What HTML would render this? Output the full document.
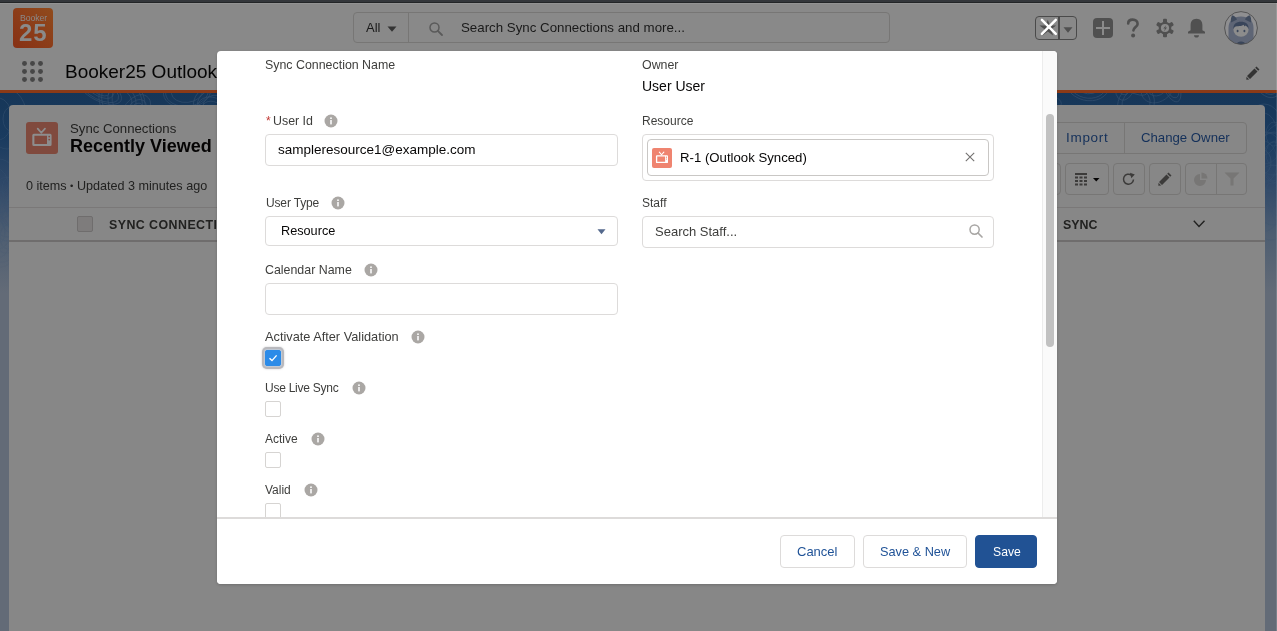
<!DOCTYPE html>
<html><head><meta charset="utf-8">
<style>
*{box-sizing:border-box;margin:0;padding:0}
html,body{width:1277px;height:631px;overflow:hidden;background:#898989;font-family:"Liberation Sans",sans-serif}
.a{position:absolute}
.t{position:absolute;white-space:nowrap;line-height:1;will-change:transform}
svg{position:absolute;overflow:visible}
</style></head><body>
<!-- ===== BACKGROUND PAGE (post-overlay colours) ===== -->
<div class="a" style="left:0;top:0;width:1277px;height:2px;background:#34373b"></div><div class="a" style="left:0;top:2px;width:1277px;height:1px;background:#232527"></div><div class="a" style="left:0;top:3px;width:1277px;height:1px;background:#939393"></div>
<!-- brand band -->
<div class="a" style="left:0;top:90px;width:1277px;height:3px;background:#8b3a17"></div>
<div class="a" style="left:0;top:93px;width:1277px;height:538px;background:linear-gradient(#163658 0px,#1a3b5f 45px,#2f4868 90px,#4d5d71 140px,#636b77 200px,#636b77 538px)"></div>
<svg id="topo" style="left:0;top:93px;overflow:hidden" width="1277" height="260"><defs><linearGradient id="tg" x1="0" y1="0" x2="0" y2="1"><stop offset="0" stop-color="#fff" stop-opacity="1"/><stop offset="0.75" stop-color="#fff" stop-opacity="0"/></linearGradient><mask id="tm"><rect width="1277" height="260" fill="url(#tg)"/></mask></defs><g mask="url(#tm)" fill="none" stroke="#3a5573" stroke-width="0.7" opacity="0.8"><ellipse cx="802" cy="17" rx="15.4" ry="13.2" transform="rotate(133 802 17)"/><ellipse cx="802" cy="17" rx="20.4" ry="17.4" transform="rotate(133 802 17)"/><ellipse cx="802" cy="17" rx="27.2" ry="23.2" transform="rotate(133 802 17)"/><ellipse cx="802" cy="17" rx="31.3" ry="26.7" transform="rotate(133 802 17)"/><ellipse cx="1169" cy="-14" rx="14.7" ry="5.3" transform="rotate(69 1169 -14)"/><ellipse cx="1169" cy="-14" rx="20.1" ry="7.3" transform="rotate(69 1169 -14)"/><ellipse cx="1169" cy="-14" rx="24.3" ry="8.8" transform="rotate(69 1169 -14)"/><ellipse cx="220" cy="23" rx="7.6" ry="2.9" transform="rotate(143 220 23)"/><ellipse cx="220" cy="23" rx="11.8" ry="4.5" transform="rotate(143 220 23)"/><ellipse cx="220" cy="23" rx="15.6" ry="6.0" transform="rotate(143 220 23)"/><ellipse cx="1130" cy="-10" rx="15.6" ry="6.2" transform="rotate(30 1130 -10)"/><ellipse cx="1130" cy="-10" rx="20.0" ry="8.0" transform="rotate(30 1130 -10)"/><ellipse cx="1136" cy="11" rx="15.4" ry="13.6" transform="rotate(124 1136 11)"/><ellipse cx="1136" cy="11" rx="20.0" ry="17.6" transform="rotate(124 1136 11)"/><ellipse cx="457" cy="-12" rx="8.6" ry="6.8" transform="rotate(60 457 -12)"/><ellipse cx="457" cy="-12" rx="13.8" ry="10.9" transform="rotate(60 457 -12)"/><ellipse cx="914" cy="-17" rx="14.2" ry="6.9" transform="rotate(87 914 -17)"/><ellipse cx="914" cy="-17" rx="19.6" ry="9.6" transform="rotate(87 914 -17)"/><ellipse cx="914" cy="-17" rx="22.4" ry="11.0" transform="rotate(87 914 -17)"/><ellipse cx="1267" cy="-19" rx="9.6" ry="6.0" transform="rotate(73 1267 -19)"/><ellipse cx="1267" cy="-19" rx="14.3" ry="9.0" transform="rotate(73 1267 -19)"/><ellipse cx="1267" cy="-19" rx="20.9" ry="13.2" transform="rotate(73 1267 -19)"/><ellipse cx="1267" cy="-19" rx="24.3" ry="15.3" transform="rotate(73 1267 -19)"/><ellipse cx="914" cy="11" rx="7.2" ry="5.7" transform="rotate(44 914 11)"/><ellipse cx="914" cy="11" rx="12.2" ry="9.7" transform="rotate(44 914 11)"/><ellipse cx="1158" cy="-7" rx="7.1" ry="5.5" transform="rotate(135 1158 -7)"/><ellipse cx="1158" cy="-7" rx="11.2" ry="8.7" transform="rotate(135 1158 -7)"/><ellipse cx="1158" cy="-7" rx="18.9" ry="14.7" transform="rotate(135 1158 -7)"/><ellipse cx="100" cy="-3" rx="9.6" ry="4.5" transform="rotate(27 100 -3)"/><ellipse cx="100" cy="-3" rx="13.8" ry="6.4" transform="rotate(27 100 -3)"/><ellipse cx="100" cy="-3" rx="20.4" ry="9.5" transform="rotate(27 100 -3)"/><ellipse cx="100" cy="-3" rx="23.5" ry="10.9" transform="rotate(27 100 -3)"/><ellipse cx="1034" cy="11" rx="12.9" ry="5.1" transform="rotate(179 1034 11)"/><ellipse cx="1034" cy="11" rx="18.9" ry="7.5" transform="rotate(179 1034 11)"/><ellipse cx="1034" cy="11" rx="23.0" ry="9.1" transform="rotate(179 1034 11)"/><ellipse cx="1034" cy="11" rx="27.3" ry="10.8" transform="rotate(179 1034 11)"/><ellipse cx="293" cy="10" rx="10.6" ry="3.5" transform="rotate(76 293 10)"/><ellipse cx="293" cy="10" rx="14.6" ry="4.9" transform="rotate(76 293 10)"/><ellipse cx="293" cy="10" rx="20.5" ry="6.8" transform="rotate(76 293 10)"/><ellipse cx="1087" cy="-13" rx="11.6" ry="9.8" transform="rotate(24 1087 -13)"/><ellipse cx="1087" cy="-13" rx="16.0" ry="13.4" transform="rotate(24 1087 -13)"/><ellipse cx="1087" cy="-13" rx="21.1" ry="17.7" transform="rotate(24 1087 -13)"/><ellipse cx="1087" cy="-13" rx="24.0" ry="20.1" transform="rotate(24 1087 -13)"/><ellipse cx="535" cy="-13" rx="14.5" ry="8.3" transform="rotate(176 535 -13)"/><ellipse cx="535" cy="-13" rx="20.0" ry="11.4" transform="rotate(176 535 -13)"/><ellipse cx="535" cy="-13" rx="24.4" ry="14.0" transform="rotate(176 535 -13)"/><ellipse cx="535" cy="-13" rx="28.3" ry="16.2" transform="rotate(176 535 -13)"/><ellipse cx="513" cy="-13" rx="14.2" ry="5.8" transform="rotate(96 513 -13)"/><ellipse cx="513" cy="-13" rx="20.0" ry="8.1" transform="rotate(96 513 -13)"/><ellipse cx="513" cy="-13" rx="22.9" ry="9.4" transform="rotate(96 513 -13)"/><ellipse cx="629" cy="6" rx="14.7" ry="11.3" transform="rotate(65 629 6)"/><ellipse cx="629" cy="6" rx="20.1" ry="15.5" transform="rotate(65 629 6)"/><ellipse cx="629" cy="6" rx="25.3" ry="19.5" transform="rotate(65 629 6)"/><ellipse cx="629" cy="6" rx="31.2" ry="24.1" transform="rotate(65 629 6)"/><ellipse cx="460" cy="15" rx="14.4" ry="12.8" transform="rotate(48 460 15)"/><ellipse cx="460" cy="15" rx="20.3" ry="18.0" transform="rotate(48 460 15)"/><ellipse cx="460" cy="15" rx="23.7" ry="21.1" transform="rotate(48 460 15)"/><ellipse cx="216" cy="23" rx="11.5" ry="8.1" transform="rotate(45 216 23)"/><ellipse cx="216" cy="23" rx="17.1" ry="12.0" transform="rotate(45 216 23)"/><ellipse cx="216" cy="23" rx="22.1" ry="15.5" transform="rotate(45 216 23)"/><ellipse cx="1033" cy="-3" rx="9.5" ry="5.2" transform="rotate(169 1033 -3)"/><ellipse cx="1033" cy="-3" rx="13.8" ry="7.5" transform="rotate(169 1033 -3)"/><ellipse cx="1033" cy="-3" rx="20.9" ry="11.4" transform="rotate(169 1033 -3)"/><ellipse cx="1033" cy="-3" rx="24.2" ry="13.2" transform="rotate(169 1033 -3)"/><ellipse cx="461" cy="-3" rx="11.3" ry="9.1" transform="rotate(30 461 -3)"/><ellipse cx="461" cy="-3" rx="16.2" ry="13.0" transform="rotate(30 461 -3)"/><ellipse cx="893" cy="16" rx="10.2" ry="8.8" transform="rotate(111 893 16)"/><ellipse cx="893" cy="16" rx="16.0" ry="13.8" transform="rotate(111 893 16)"/><ellipse cx="893" cy="16" rx="19.4" ry="16.7" transform="rotate(111 893 16)"/><ellipse cx="893" cy="16" rx="25.5" ry="22.0" transform="rotate(111 893 16)"/><ellipse cx="1125" cy="-6" rx="8.0" ry="5.4" transform="rotate(106 1125 -6)"/><ellipse cx="1125" cy="-6" rx="13.5" ry="9.1" transform="rotate(106 1125 -6)"/><ellipse cx="218" cy="16" rx="15.8" ry="13.2" transform="rotate(30 218 16)"/><ellipse cx="218" cy="16" rx="21.7" ry="18.1" transform="rotate(30 218 16)"/><ellipse cx="218" cy="16" rx="25.7" ry="21.5" transform="rotate(30 218 16)"/><ellipse cx="704" cy="1" rx="9.8" ry="6.4" transform="rotate(110 704 1)"/><ellipse cx="704" cy="1" rx="15.6" ry="10.2" transform="rotate(110 704 1)"/><ellipse cx="704" cy="1" rx="17.8" ry="11.6" transform="rotate(110 704 1)"/><ellipse cx="515" cy="-6" rx="14.7" ry="9.2" transform="rotate(124 515 -6)"/><ellipse cx="515" cy="-6" rx="19.8" ry="12.4" transform="rotate(124 515 -6)"/><ellipse cx="515" cy="-6" rx="23.9" ry="15.0" transform="rotate(124 515 -6)"/><ellipse cx="370" cy="6" rx="8.9" ry="3.4" transform="rotate(63 370 6)"/><ellipse cx="370" cy="6" rx="14.1" ry="5.3" transform="rotate(63 370 6)"/><ellipse cx="370" cy="6" rx="19.1" ry="7.2" transform="rotate(63 370 6)"/><ellipse cx="370" cy="6" rx="23.7" ry="9.0" transform="rotate(63 370 6)"/><ellipse cx="187" cy="-1" rx="15.6" ry="10.4" transform="rotate(174 187 -1)"/><ellipse cx="187" cy="-1" rx="21.4" ry="14.2" transform="rotate(174 187 -1)"/><ellipse cx="187" cy="-1" rx="23.6" ry="15.7" transform="rotate(174 187 -1)"/><ellipse cx="122" cy="8" rx="11.4" ry="9.4" transform="rotate(59 122 8)"/><ellipse cx="122" cy="8" rx="16.3" ry="13.4" transform="rotate(59 122 8)"/><ellipse cx="122" cy="8" rx="23.3" ry="19.2" transform="rotate(59 122 8)"/><ellipse cx="122" cy="8" rx="26.4" ry="21.8" transform="rotate(59 122 8)"/><ellipse cx="613" cy="15" rx="15.6" ry="10.3" transform="rotate(164 613 15)"/><ellipse cx="613" cy="15" rx="21.6" ry="14.2" transform="rotate(164 613 15)"/><ellipse cx="613" cy="15" rx="25.6" ry="16.8" transform="rotate(164 613 15)"/><ellipse cx="528" cy="-4" rx="10.9" ry="6.4" transform="rotate(52 528 -4)"/><ellipse cx="528" cy="-4" rx="16.2" ry="9.5" transform="rotate(52 528 -4)"/><ellipse cx="528" cy="-4" rx="20.7" ry="12.1" transform="rotate(52 528 -4)"/><ellipse cx="367" cy="19" rx="6.1" ry="2.8" transform="rotate(96 367 19)"/><ellipse cx="367" cy="19" rx="11.7" ry="5.4" transform="rotate(96 367 19)"/><ellipse cx="367" cy="19" rx="15.1" ry="7.0" transform="rotate(96 367 19)"/><ellipse cx="333" cy="-12" rx="8.9" ry="5.2" transform="rotate(109 333 -12)"/><ellipse cx="333" cy="-12" rx="14.1" ry="8.3" transform="rotate(109 333 -12)"/><ellipse cx="333" cy="-12" rx="19.9" ry="11.6" transform="rotate(109 333 -12)"/><ellipse cx="136" cy="18" rx="8.8" ry="5.9" transform="rotate(127 136 18)"/><ellipse cx="136" cy="18" rx="12.9" ry="8.6" transform="rotate(127 136 18)"/><ellipse cx="136" cy="18" rx="18.2" ry="12.2" transform="rotate(127 136 18)"/><ellipse cx="880" cy="21" rx="6.4" ry="3.6" transform="rotate(45 880 21)"/><ellipse cx="880" cy="21" rx="12.1" ry="7.0" transform="rotate(45 880 21)"/><ellipse cx="700" cy="-19" rx="11.9" ry="10.4" transform="rotate(124 700 -19)"/><ellipse cx="700" cy="-19" rx="17.7" ry="15.4" transform="rotate(124 700 -19)"/><ellipse cx="700" cy="-19" rx="23.3" ry="20.3" transform="rotate(124 700 -19)"/><ellipse cx="608" cy="14" rx="8.0" ry="6.4" transform="rotate(53 608 14)"/><ellipse cx="608" cy="14" rx="13.6" ry="10.9" transform="rotate(53 608 14)"/><ellipse cx="608" cy="14" rx="18.7" ry="15.0" transform="rotate(53 608 14)"/><ellipse cx="608" cy="14" rx="22.6" ry="18.0" transform="rotate(53 608 14)"/><ellipse cx="358" cy="19" rx="7.4" ry="4.7" transform="rotate(86 358 19)"/><ellipse cx="358" cy="19" rx="12.1" ry="7.6" transform="rotate(86 358 19)"/><ellipse cx="358" cy="19" rx="16.0" ry="10.1" transform="rotate(86 358 19)"/><ellipse cx="10" cy="96" rx="8" ry="12"/><ellipse cx="-5" cy="96" rx="14" ry="21"/><ellipse cx="-1" cy="96" rx="20" ry="30"/><ellipse cx="10" cy="127" rx="8" ry="12"/><ellipse cx="7" cy="127" rx="14" ry="21"/><ellipse cx="-5" cy="127" rx="20" ry="30"/><ellipse cx="14" cy="114" rx="8" ry="12"/><ellipse cx="14" cy="114" rx="14" ry="21"/><ellipse cx="8" cy="114" rx="20" ry="30"/><ellipse cx="11" cy="26" rx="8" ry="12"/><ellipse cx="-2" cy="26" rx="14" ry="21"/><ellipse cx="7" cy="26" rx="20" ry="30"/><ellipse cx="8" cy="144" rx="8" ry="12"/><ellipse cx="-3" cy="144" rx="14" ry="21"/><ellipse cx="-0" cy="144" rx="20" ry="30"/><ellipse cx="-3" cy="139" rx="8" ry="12"/><ellipse cx="6" cy="139" rx="14" ry="21"/><ellipse cx="2" cy="139" rx="20" ry="30"/><ellipse cx="1274" cy="41" rx="8" ry="12"/><ellipse cx="1263" cy="41" rx="14" ry="21"/><ellipse cx="1264" cy="41" rx="20" ry="30"/><ellipse cx="1263" cy="69" rx="8" ry="12"/><ellipse cx="1263" cy="69" rx="14" ry="21"/><ellipse cx="1274" cy="69" rx="20" ry="30"/><ellipse cx="1280" cy="117" rx="8" ry="12"/><ellipse cx="1265" cy="117" rx="14" ry="21"/><ellipse cx="1271" cy="117" rx="20" ry="30"/><ellipse cx="1274" cy="61" rx="8" ry="12"/><ellipse cx="1272" cy="61" rx="14" ry="21"/><ellipse cx="1281" cy="61" rx="20" ry="30"/><ellipse cx="1263" cy="69" rx="8" ry="12"/><ellipse cx="1276" cy="69" rx="14" ry="21"/><ellipse cx="1265" cy="69" rx="20" ry="30"/><ellipse cx="1272" cy="102" rx="8" ry="12"/><ellipse cx="1280" cy="102" rx="14" ry="21"/><ellipse cx="1273" cy="102" rx="20" ry="30"/></g></svg>
<!-- card -->
<div class="a" style="left:9px;top:105px;width:1256px;height:540px;background:#878787;border-radius:4px"></div>
<div class="a" style="left:1276px;top:3px;width:1px;height:628px;background:rgba(255,255,255,0.15)"></div>

<!-- header: logo -->
<div class="a" style="left:13px;top:8px;width:40px;height:40px;border-radius:4px;background:linear-gradient(45deg,#873115,#8c3d19 50%,#904b1c)"></div>
<div class="t" style="left:19.5px;top:14.1px;font-size:8.7px;color:#8a8a8a;letter-spacing:-0.1px">Booker</div>
<div class="t" style="left:19.3px;top:20.6px;font-size:24px;font-weight:bold;color:#8a8a8a;letter-spacing:0.8px">25</div>

<!-- search -->
<div class="a" style="left:353px;top:12px;width:537px;height:31px;border:1px solid #777675;border-radius:4px"></div>
<div class="a" style="left:408px;top:13px;width:1px;height:29px;background:#777675"></div>
<div class="t" style="left:366px;top:21px;font-size:13px;color:#1a1a1a">All</div>
<svg style="left:387px;top:26px" width="10" height="6"><path d="M0.5 0.5H9.5L5 5.8Z" fill="#333"/></svg>
<svg style="left:429px;top:22px" width="14" height="14"><circle cx="5.5" cy="5.5" r="4.5" fill="none" stroke="#5a5a5a" stroke-width="1.5"/><path d="M8.8 8.8L13 13" stroke="#5a5a5a" stroke-width="1.8" stroke-linecap="round"/></svg>
<div class="t" style="left:461.3px;top:20.8px;font-size:13.3px;color:#1a1a1a">Search Sync Connections and more...</div>

<!-- favourites group -->
<div class="a" style="left:1035px;top:16px;width:42px;height:24px;border:1.5px solid #4a4a4a;border-radius:4px"></div>
<div class="a" style="left:1058px;top:16px;width:2px;height:24px;background:#4a4a4a"></div>
<svg style="left:1039px;top:18.5px" width="18" height="18"><path d="M8.8 0.8L11 6.6H17.1L12.1 10.3L14.1 16.4L8.8 12.6L3.5 16.4L5.5 10.3L0.5 6.6H6.6Z" fill="#4f4f4f"/></svg>
<svg style="left:1063px;top:27px" width="10" height="6"><path d="M0.5 0.3H9.5L5 5.7Z" fill="#505050"/></svg>
<!-- modal close X (white, above overlay) -->
<svg style="left:1040px;top:18px" width="18" height="18"><path d="M1.9 1.9L15.8 15.8M15.8 1.9L1.9 15.8" stroke="#fff" stroke-width="2.5" stroke-linecap="round"/></svg>

<!-- plus -->
<div class="a" style="left:1093px;top:18px;width:20px;height:20px;border-radius:4px;background:#505050"></div>
<div class="a" style="left:1096px;top:27px;width:14px;height:2px;background:#8a8a8a"></div>
<div class="a" style="left:1102px;top:21px;width:2px;height:14px;background:#8a8a8a"></div>
<!-- help -->
<svg style="left:1126px;top:18px" width="14" height="20"><path d="M2.2 5.4C2.2 3 4.2 1.6 6.8 1.6C9.6 1.6 11.6 3.3 11.6 5.9C11.6 8.6 7.6 9.4 7.4 12.4" fill="none" stroke="#505050" stroke-width="2.6" stroke-linecap="round"/><circle cx="7.1" cy="17.4" r="2" fill="#505050"/></svg>
<!-- gear -->
<svg style="left:1156px;top:18px" width="18" height="20" viewBox="0 0 18 20"><g fill="#505050"><circle cx="9" cy="10" r="6.3"/><rect x="7" y="0.8" width="4" height="4" rx="1"/><rect x="7" y="15.2" width="4" height="4" rx="1"/><rect x="7" y="0.8" width="4" height="4" rx="1" transform="rotate(60 9 10)"/><rect x="7" y="0.8" width="4" height="4" rx="1" transform="rotate(120 9 10)"/><rect x="7" y="0.8" width="4" height="4" rx="1" transform="rotate(240 9 10)"/><rect x="7" y="0.8" width="4" height="4" rx="1" transform="rotate(300 9 10)"/></g><circle cx="9" cy="10" r="4.1" fill="#8a8a8a"/><path d="M10.3 6.9L7.3 10.6H9.1L8 13.4L11 9.5H9.2Z" fill="#505050"/></svg>
<!-- bell -->
<svg style="left:1187px;top:18px" width="20" height="20"><path d="M9.5 0.8C5.6 0.8 3.6 3.6 3.6 7V12.2L1 13.8V15.6H18V13.8L15.4 12.2V7C15.4 3.6 13.4 0.8 9.5 0.8Z" fill="#505050"/><path d="M7 17.2H12C12 18.6 10.9 19.5 9.5 19.5C8.1 19.5 7 18.6 7 17.2Z" fill="#505050"/></svg>
<!-- avatar -->
<svg style="left:1224px;top:11px" width="34" height="34" viewBox="0 0 34 34"><defs><clipPath id="avc"><circle cx="17" cy="17" r="16.2"/></clipPath></defs><circle cx="17" cy="17" r="16.5" fill="#8f8f91"/><g clip-path="url(#avc)"><path d="M4.5 34V17C4.5 9.5 9.5 5.5 17 5.5C24.5 5.5 29.5 9.5 29.5 17V34Z" fill="#5e6575"/><path d="M7 11.5C6.5 8.5 7 5.5 8.5 4.2C10.5 5 12.5 6.5 13 8.5Z M27 11.5C27.5 8.5 27 5.5 25.5 4.2C23.5 5 21.5 6.5 21 8.5Z" fill="#3f4a5c"/><ellipse cx="17" cy="18.5" rx="7.6" ry="7.3" fill="#8c8c8c"/><path d="M9.3 18.5C9 13 12.3 10.8 17 10.8C21.7 10.8 25 13 24.7 18.5C23.8 16 22.5 14.8 21.3 14.5L20.5 15.6L19.6 13.8C17.5 15.5 13 15 11 15.8C10.2 16.6 9.6 17.5 9.3 18.5Z" fill="#39455a"/><ellipse cx="13.6" cy="20" rx="0.95" ry="1.3" fill="#39455a"/><ellipse cx="20.4" cy="20" rx="0.95" ry="1.3" fill="#39455a"/><ellipse cx="17" cy="33" rx="4" ry="2.6" fill="#39455a"/></g><circle cx="17" cy="17" r="16.4" fill="none" stroke="#4d4d4d" stroke-width="0.9"/></svg>

<!-- app bar -->
<svg style="left:22px;top:61px" width="22" height="22"><g fill="#474747"><circle cx="2.5" cy="2.5" r="2.45"/><circle cx="10.5" cy="2.5" r="2.45"/><circle cx="18.5" cy="2.5" r="2.45"/><circle cx="2.5" cy="10.5" r="2.45"/><circle cx="10.5" cy="10.5" r="2.45"/><circle cx="18.5" cy="10.5" r="2.45"/><circle cx="2.5" cy="18.5" r="2.45"/><circle cx="10.5" cy="18.5" r="2.45"/><circle cx="18.5" cy="18.5" r="2.45"/></g></svg>
<div class="t" style="left:65px;top:62px;font-size:19px;color:#050505">Booker25 Outlook</div>
<svg style="left:1246px;top:66px" width="14" height="14"><path d="M10.5 0.5L13.5 3.5L12.2 4.8L9.2 1.8Z M8.5 2.5L11.5 5.5L4 13L1 10Z M0.5 10.8L3.2 13.5L0.3 13.8Z" fill="#333"/></svg>

<!-- card header -->
<div class="a" style="left:26px;top:122px;width:32px;height:32px;border-radius:3px;background:#804a3e"></div>
<svg style="left:26px;top:122px" width="32" height="32"><path d="M11.7 6.6L15.3 10.8L19 6.6" fill="none" stroke="#8d8d8d" stroke-width="1.7" stroke-linecap="round" stroke-linejoin="round"/><path fill-rule="evenodd" d="M7.8 11.7H24.1A1.5 1.5 0 0 1 25.6 13.2V22.6A1.5 1.5 0 0 1 24.1 24.1H7.8A1.5 1.5 0 0 1 6.3 22.6V13.2A1.5 1.5 0 0 1 7.8 11.7ZM8.4 13.7V22.1H21V13.7Z" fill="#8d8d8d"/><circle cx="23.2" cy="14.6" r="0.9" fill="#804a3e"/><circle cx="23.2" cy="17.6" r="0.9" fill="#804a3e"/></svg>
<div class="t" style="left:70px;top:121.5px;font-size:13.2px;color:#212120">Sync Connections</div>
<div class="t" style="left:70px;top:136.8px;font-size:18px;font-weight:bold;color:#050404">Recently Viewed</div>
<div class="t" style="left:26px;top:180.3px;font-size:12.6px;color:#212120">0 items <span style="font-size:9.5px;position:relative;top:-1.5px;line-height:0">•</span> Updated 3 minutes ago</div>

<!-- buttons group right -->
<div class="a" style="left:1040px;top:122px;width:207px;height:32px;border:1px solid #777675;border-radius:4px"></div>
<div class="a" style="left:1124px;top:122px;width:1px;height:32px;background:#777675"></div>
<div class="t" style="left:1065.5px;top:130.5px;font-size:13.5px;color:#14305a;letter-spacing:0.7px">Import</div>
<div class="t" style="left:1141px;top:130.7px;font-size:13.2px;color:#14305a">Change Owner</div>

<!-- toolbar -->
<div class="a" style="left:1030px;top:163px;width:31px;height:32px;border:1px solid #777675;border-radius:4px"></div>
<div class="a" style="left:1065px;top:163px;width:44px;height:32px;border:1px solid #777675;border-radius:4px"></div>
<div class="a" style="left:1113px;top:163px;width:32px;height:32px;border:1px solid #777675;border-radius:4px"></div>
<div class="a" style="left:1149px;top:163px;width:32px;height:32px;border:1px solid #777675;border-radius:4px"></div>
<div class="a" style="left:1185px;top:163px;width:62px;height:32px;border:1px solid #777675;border-radius:4px"></div>
<div class="a" style="left:1216px;top:163px;width:1px;height:32px;background:#777675"></div>
<svg style="left:1075px;top:173px" width="26" height="14"><g fill="#3c3b3a"><rect x="0" y="0" width="12" height="2"/><rect x="0" y="3.5" width="3" height="2"/><rect x="4.5" y="3.5" width="3" height="2"/><rect x="9" y="3.5" width="3" height="2"/><rect x="0" y="7" width="3" height="2"/><rect x="4.5" y="7" width="3" height="2"/><rect x="9" y="7" width="3" height="2"/><rect x="0" y="10.5" width="3" height="2"/><rect x="4.5" y="10.5" width="3" height="2"/><rect x="9" y="10.5" width="3" height="2"/></g><path d="M18 5H24.5L21.25 8.5Z" fill="#050404"/></svg>
<svg style="left:1122px;top:172px" width="14" height="14"><path d="M11.5 7.5A5 5 0 1 1 9.5 3.2" fill="none" stroke="#3c3b3a" stroke-width="1.5"/><path d="M8 0.8L12.8 2.6L9.3 6.2Z" fill="#3c3b3a"/></svg>
<svg style="left:1158px;top:172px" width="14" height="14"><path d="M10.5 0.5L13.5 3.5L12.2 4.8L9.2 1.8Z M8.5 2.5L11.5 5.5L4 13L1 10Z M0.5 10.8L3.2 13.5L0.3 13.8Z" fill="#3c3b3a"/></svg>
<svg style="left:1194px;top:172px" width="14" height="14"><path d="M6 2A6 6 0 1 0 12 8H6Z" fill="#777675"/><path d="M7.5 0.5A6 6 0 0 1 13.5 6.5H7.5Z" fill="#777675"/></svg>
<svg style="left:1224px;top:172px" width="16" height="14"><path d="M0.5 0.5H15.5L9.5 6.5V13.5H6.5V6.5Z" fill="#777675"/></svg>

<!-- table header -->
<div class="a" style="left:9px;top:207px;width:1256px;height:1px;background:#7a7878"></div>
<div class="a" style="left:9px;top:240px;width:1256px;height:2px;background:#6f6d6d"></div>
<div class="a" style="left:77px;top:216px;width:16px;height:16px;border:1px solid #6f6d6d;border-radius:2px;background:#7e7c7c"></div>
<div class="t" style="left:109px;top:219px;font-size:12.4px;font-weight:bold;color:#212120;letter-spacing:0.45px">SYNC CONNECTIONS</div>
<div class="t" style="left:1063px;top:219px;font-size:12.4px;font-weight:bold;color:#212120;letter-spacing:0px">SYNC</div>
<svg style="left:1193px;top:220px" width="13" height="8"><path d="M0.8 0.8L6 6.5L11.5 0.8" fill="none" stroke="#212120" stroke-width="1.4"/></svg>

<!-- ===== MODAL ===== -->
<div class="a" id="modal" style="left:217px;top:51px;width:840px;height:533px;background:#fff;border-radius:4px;box-shadow:0 1px 3px rgba(0,0,0,0.18)"></div>
<div class="a" style="left:1042px;top:51px;width:15px;height:466px;background:#fafafa;border-left:1px solid #ececec;border-top-right-radius:4px"></div>
<div class="a" style="left:1046px;top:114px;width:8px;height:233px;background:#c1c1c1;border-radius:4px"></div>
<div class="t" style="left:265px;top:58.50px;font-size:12.4px;color:#3e3e3c;">Sync Connection Name</div>
<div class="t" style="left:642px;top:58.50px;font-size:12.4px;color:#3e3e3c;">Owner</div>
<div class="t" style="left:642px;top:79.15px;font-size:14px;color:#080707;">User User</div>
<div class="t" style="left:265.5px;top:115px;font-size:12px;color:#c23934">*</div>
<div class="t" style="left:272.7px;top:114.50px;font-size:12.4px;color:#3e3e3c;">User Id</div>
<svg style="left:324px;top:114px" width="14" height="14"><circle cx="7" cy="7" r="6.5" fill="#aaa7a4"/><rect x="6.25" y="6" width="1.5" height="4.4" fill="#fff"/><circle cx="7" cy="4.2" r="0.9" fill="#fff"/></svg>
<div class="t" style="left:642px;top:114.84px;font-size:12px;color:#3e3e3c;">Resource</div>
<div class="a" style="left:265px;top:134px;width:353px;height:32px;border:1px solid #dddbda;border-radius:4px;background:#fff;"></div>
<div class="t" style="left:278px;top:142.57px;font-size:13.5px;color:#080707;">sampleresource1@example.com</div>
<div class="a" style="left:642px;top:134px;width:352px;height:47px;border:1px solid #dddbda;border-radius:4px;background:#fff;"></div>
<div class="a" style="left:647px;top:139px;width:342px;height:37px;border:1px solid #c9c7c5;border-radius:4px;background:#fff;"></div>
<div class="a" style="left:652px;top:148px;width:20px;height:20px;border-radius:2px;background:#ef8470"></div>
<svg style="left:652px;top:148px" width="20" height="20"><g transform="scale(0.625)"><path d="M11.7 6.6L15.3 10.8L19 6.6" fill="none" stroke="#fff" stroke-width="1.7" stroke-linecap="round" stroke-linejoin="round"/><path fill-rule="evenodd" d="M7.8 11.7H24.1A1.5 1.5 0 0 1 25.6 13.2V22.6A1.5 1.5 0 0 1 24.1 24.1H7.8A1.5 1.5 0 0 1 6.3 22.6V13.2A1.5 1.5 0 0 1 7.8 11.7ZM8.4 13.7V22.1H21V13.7Z" fill="#fff"/><circle cx="23.2" cy="14.6" r="0.9" fill="#ef8470"/><circle cx="23.2" cy="17.6" r="0.9" fill="#ef8470"/></g></svg>
<div class="t" style="left:680px;top:150.83px;font-size:13.2px;color:#080707;">R-1 (Outlook Synced)</div>
<svg style="left:965px;top:152px" width="10" height="10"><path d="M0.8 0.8L9.2 9.2M9.2 0.8L0.8 9.2" stroke="#737170" stroke-width="1.1"/></svg>
<div class="t" style="left:265.5px;top:196.84px;font-size:12px;color:#3e3e3c;letter-spacing:-0.15px">User Type</div>
<svg style="left:331px;top:196px" width="14" height="14"><circle cx="7" cy="7" r="6.5" fill="#aaa7a4"/><rect x="6.25" y="6" width="1.5" height="4.4" fill="#fff"/><circle cx="7" cy="4.2" r="0.9" fill="#fff"/></svg>
<div class="t" style="left:642px;top:196.84px;font-size:12px;color:#3e3e3c;">Staff</div>
<div class="a" style="left:265px;top:216px;width:353px;height:30px;border:1px solid #dddbda;border-radius:4px;background:#fff;"></div>
<div class="t" style="left:280.6px;top:225.0px;font-size:12.7px;color:#080707;">Resource</div>
<svg style="left:597.2px;top:229px" width="9" height="6"><path d="M0.5 0.2H8.5L4.5 5.2Z" fill="#54698d"/></svg>
<div class="a" style="left:642px;top:216px;width:352px;height:32px;border:1px solid #dddbda;border-radius:4px;background:#fff;"></div>
<div class="t" style="left:654.8px;top:224.70px;font-size:13px;color:#3e3e3c;">Search Staff...</div>
<svg style="left:969px;top:224px" width="14" height="14"><circle cx="5.6" cy="5.6" r="4.6" fill="none" stroke="#a8a6a4" stroke-width="1.5"/><path d="M9 9L13 13" stroke="#a8a6a4" stroke-width="1.7" stroke-linecap="round"/></svg>
<div class="t" style="left:265px;top:263.50px;font-size:12.4px;color:#3e3e3c;">Calendar Name</div>
<svg style="left:364px;top:263px" width="14" height="14"><circle cx="7" cy="7" r="6.5" fill="#aaa7a4"/><rect x="6.25" y="6" width="1.5" height="4.4" fill="#fff"/><circle cx="7" cy="4.2" r="0.9" fill="#fff"/></svg>
<div class="a" style="left:265px;top:283px;width:353px;height:32px;border:1px solid #dddbda;border-radius:4px;background:#fff;"></div>
<div class="t" style="left:265px;top:331.16px;font-size:12.75px;color:#3e3e3c;">Activate After Validation</div>
<svg style="left:411px;top:329.5px" width="14" height="14"><circle cx="7" cy="7" r="6.5" fill="#aaa7a4"/><rect x="6.25" y="6" width="1.5" height="4.4" fill="#fff"/><circle cx="7" cy="4.2" r="0.9" fill="#fff"/></svg>
<div class="a" style="left:265px;top:350px;width:16px;height:16px;border-radius:2px;background:#2b8be8;border:1px solid #2b8be8;box-shadow:0 0 0 1px #bfc9d6,0 0 0 3px #b9b9bd,0 0 2px 3px rgba(175,175,180,.7)"></div>
<svg style="left:268px;top:353px" width="10" height="10"><path d="M1.5 5.2L4 7.6L8.6 2.4" fill="none" stroke="#fff" stroke-width="1.4"/></svg>
<div class="t" style="left:265px;top:381.84px;font-size:12px;color:#3e3e3c;letter-spacing:-0.25px">Use Live Sync</div>
<svg style="left:352px;top:381px" width="14" height="14"><circle cx="7" cy="7" r="6.5" fill="#aaa7a4"/><rect x="6.25" y="6" width="1.5" height="4.4" fill="#fff"/><circle cx="7" cy="4.2" r="0.9" fill="#fff"/></svg>
<div class="a" style="left:265px;top:401px;width:16px;height:16px;border:1px solid #d6d4d2;border-radius:2px;background:#fff;"></div>
<div class="t" style="left:265px;top:432.84px;font-size:12px;color:#3e3e3c;">Active</div>
<svg style="left:311px;top:432px" width="14" height="14"><circle cx="7" cy="7" r="6.5" fill="#aaa7a4"/><rect x="6.25" y="6" width="1.5" height="4.4" fill="#fff"/><circle cx="7" cy="4.2" r="0.9" fill="#fff"/></svg>
<div class="a" style="left:265px;top:452px;width:16px;height:16px;border:1px solid #d6d4d2;border-radius:2px;background:#fff;"></div>
<div class="t" style="left:265px;top:483.84px;font-size:12px;color:#3e3e3c;">Valid</div>
<svg style="left:304px;top:483px" width="14" height="14"><circle cx="7" cy="7" r="6.5" fill="#aaa7a4"/><rect x="6.25" y="6" width="1.5" height="4.4" fill="#fff"/><circle cx="7" cy="4.2" r="0.9" fill="#fff"/></svg>
<div class="a" style="left:265px;top:503px;width:16px;height:16px;border:1px solid #d6d4d2;border-radius:2px;background:#fff;"></div>
<div class="a" style="left:217px;top:517px;width:840px;height:67px;background:#fff;border-top:2px solid #dddbda;border-radius:0 0 4px 4px"></div>
<div class="a" style="left:780px;top:535px;width:75px;height:33px;border:1px solid #dddbda;border-radius:4px;background:#fff;"></div>
<div class="t" style="left:797.3px;top:544.70px;font-size:13px;color:#1f5297;">Cancel</div>
<div class="a" style="left:863px;top:535px;width:104px;height:33px;border:1px solid #dddbda;border-radius:4px;background:#fff;"></div>
<div class="t" style="left:880px;top:545.8px;font-size:12.75px;color:#1f5297;">Save &amp; New</div>
<div class="a" style="left:975px;top:535px;width:62px;height:33px;border:1px solid #215294;border-radius:4px;background:#215294;"></div>
<div class="t" style="left:992.6px;top:545.6px;font-size:12.2px;color:#fff;">Save</div>

</body></html>
